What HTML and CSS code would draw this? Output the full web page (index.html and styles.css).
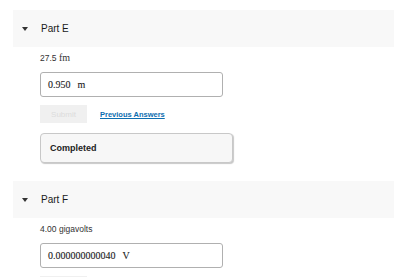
FILE: index.html
```html
<!DOCTYPE html>
<html>
<head>
<meta charset="utf-8">
<link rel="stylesheet" href="styles.css">
</head>
<body>
<div class="page">
  <div class="part-head">
    <span class="caret"></span>
    <span class="part-title">Part E</span>
  </div>
  <div class="part-body">
    <div class="prompt">27.5 <span class="math">fm</span></div>
    <div class="answer"><span class="math">0.950&nbsp;&nbsp;m</span></div>
    <div class="actions">
      <span class="submit">Submit</span>
      <a class="prev" href="#">Previous Answers</a>
    </div>
    <div class="completed">Completed</div>
  </div>
  <div class="part-head">
    <span class="caret"></span>
    <span class="part-title">Part F</span>
  </div>
  <div class="part-body">
    <div class="prompt">4.00 gigavolts</div>
    <div class="answer"><span class="math">0.000000000040&nbsp;&nbsp;V</span></div>
    <div class="actions">
      <span class="submit"></span>
    </div>
  </div>
</div>
</body>
</html>
```
FILE: styles.css
```css
html, body {
  margin: 0;
  padding: 0;
  background: #fff;
  font-family: "Liberation Sans", Arial, sans-serif;
  color: #222;
}
.page {
  padding-top: 10px;
  padding-left: 13px;
}
.part-head {
  height: 37px;
  background: #f8f8f8;
  display: flex;
  align-items: center;
  padding-left: 9px;
}
.caret {
  width: 0;
  height: 0;
  border-left: 3.5px solid transparent;
  border-right: 3.5px solid transparent;
  border-top: 4px solid #333;
  margin-right: 13px;
}
.part-title {
  font-size: 10px;
  color: #1a1a1a;
}
.part-body {
  padding-left: 27px;
  padding-top: 6px;
  padding-bottom: 18px;
}
.prompt {
  font-size: 8.5px;
  height: 10px;
  line-height: 10px;
  color: #333;
}
.math {
  font-family: "Liberation Serif", "Times New Roman", serif;
}
.prompt .math {
  font-size: 10px;
}
.answer {
  box-sizing: border-box;
  margin-top: 9px;
  width: 183px;
  height: 25px;
  border: 1px solid #b0b0b0;
  border-radius: 3px;
  display: flex;
  align-items: center;
  padding-left: 7px;
  color: #1a1a1a;
}
.answer .math {
  font-size: 10px;
  -webkit-text-stroke: 0.1px #1a1a1a;
  word-spacing: 1px;
}
.actions {
  margin-top: 8px;
  height: 18px;
  display: flex;
  align-items: center;
}
.submit {
  width: 47px;
  height: 18px;
  background: #f0f0f0;
  color: #dcdcdc;
  font-size: 8px;
  display: flex;
  align-items: center;
  justify-content: center;
}
.prev {
  margin-left: 13px;
  font-size: 7.5px;
  font-weight: bold;
  color: #0d6eb0;
  text-decoration: underline;
}
.completed {
  box-sizing: border-box;
  margin-top: 10px;
  width: 193px;
  height: 30px;
  border: 1px solid #c8c8c8;
  border-radius: 4px;
  background: #f7f7f7;
  box-shadow: 1px 1px 1px #c8c8c8;
  font-size: 9px;
  font-weight: bold;
  color: #222;
  display: flex;
  align-items: center;
  padding-left: 9px;
}
```
